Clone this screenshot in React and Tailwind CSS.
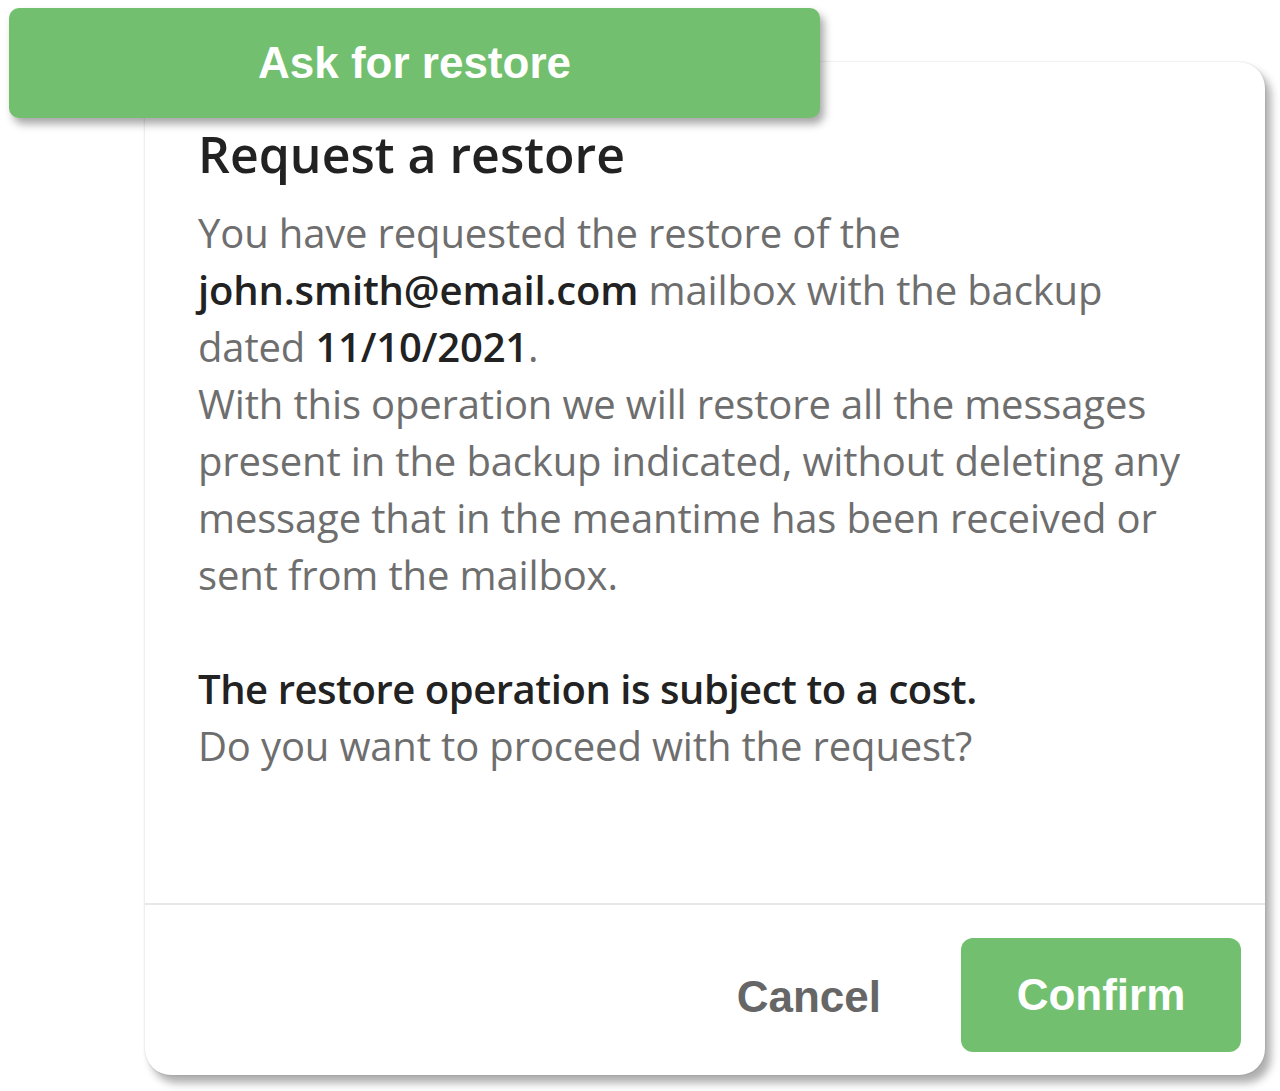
export default function App() {
  const body = "font-['Open_Sans',sans-serif]";
  return (
    <div className="relative w-[1280px] h-[1091px] bg-white overflow-hidden">
      <div className="pt-[62px] pl-[145px]">
        <div className="w-[1120px] h-[1013px] bg-white rounded-[26px] shadow-[0_0_2px_rgba(0,0,0,0.18),6px_8px_8px_rgba(0,0,0,0.32)] flex flex-col overflow-hidden">
          <div className={`h-[843px] border-b-2 border-[#e8e8e8] pt-[64px] pl-[53px] ${body}`}>
            <h1 className="text-[50px] leading-[56px] font-semibold text-[#222]">Request a restore</h1>
            <div className="mt-[22px] text-[40px] leading-[57px] text-[#6e6e6e] tracking-[-0.15px]">
              <p>
                You have requested the restore of the<br />
                <span className="font-semibold text-[#222]">john.smith@email.com</span> mailbox with the backup<br />
                dated <span className="font-semibold text-[#222]">11/10/2021</span>.<br />
                With this operation we will restore all the messages<br />
                present in the backup indicated, without deleting any<br />
                message that in the meantime has been received or<br />
                sent from the mailbox.
              </p>
              <p className="mt-[57px] font-semibold text-[#222] tracking-[-0.45px]">The restore operation is subject to a cost.</p>
              <p>Do you want to proceed with the request?</p>
            </div>
          </div>
          <div className="flex items-start justify-end pt-[33px] pr-[24px] font-['Liberation_Sans',Arial,sans-serif] font-bold text-[44px]">
            <button className="text-[#666] mt-[33px] mr-[80px] leading-[52px]">Cancel</button>
            <button className="w-[280px] h-[114px] rounded-[12px] bg-[#72c06f] text-white">Confirm</button>
          </div>
        </div>
      </div>
      <div className="absolute left-[9px] top-[8px] w-[811px] h-[110px] rounded-[10px] bg-[#72c06f] shadow-[4px_6px_8px_rgba(0,0,0,0.35)] flex items-center justify-center font-['Liberation_Sans',Arial,sans-serif] font-bold text-[44px] text-white">
        Ask for restore
      </div>
    </div>
  );
}
